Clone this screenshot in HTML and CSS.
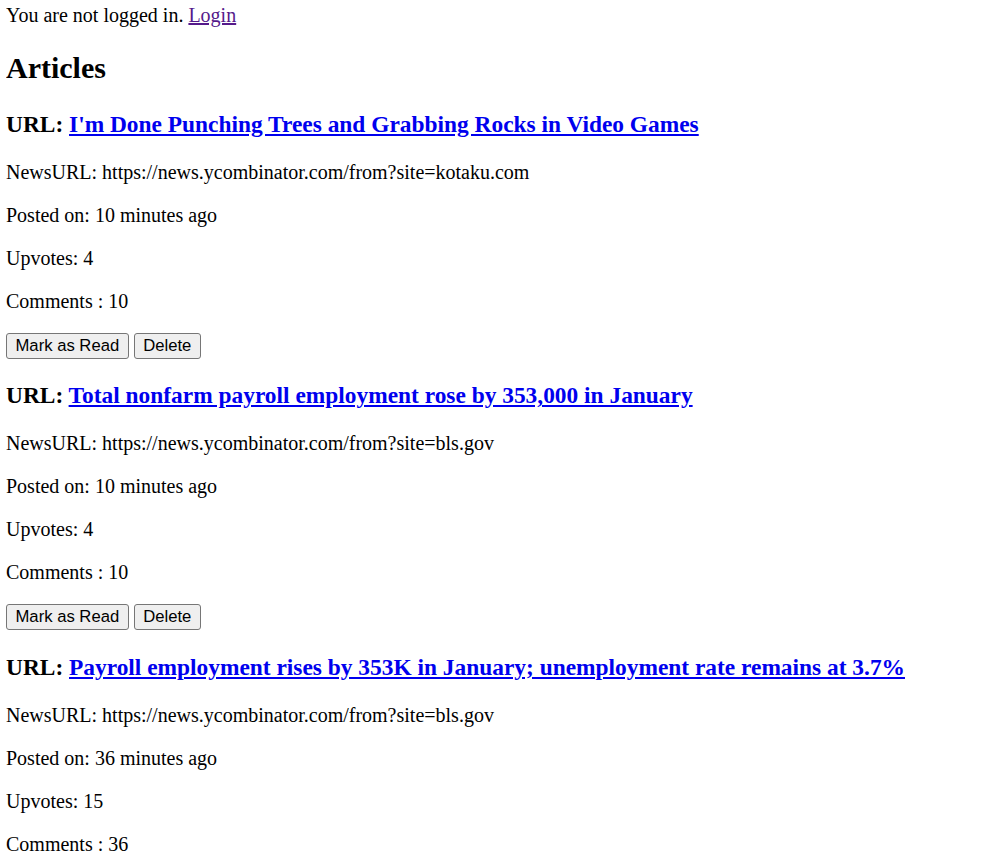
FILE: index.html
```html
<!DOCTYPE html>
<html>
<head>
<meta charset="utf-8">
<title>Articles</title>
<link rel="stylesheet" href="styles.css">
</head>
<body>
<div class="status">You are not logged in. <a class="visited" href="#login">Login</a></div>
<h2 class="title">Articles</h2>

<div class="article">
  <h3 class="url">URL: <a href="#a1">I'm Done Punching Trees and Grabbing Rocks in Video Games</a></h3>
  <p>NewsURL: https://news.ycombinator.com/from?site=kotaku.com</p>
  <p>Posted on: 10 minutes ago</p>
  <p>Upvotes: 4</p>
  <p>Comments : 10</p>
  <button class="btn">Mark as Read</button> <button class="btn">Delete</button>
</div>

<div class="article">
  <h3 class="url">URL: <a href="#a2">Total nonfarm payroll employment rose by 353,000 in January</a></h3>
  <p>NewsURL: https://news.ycombinator.com/from?site=bls.gov</p>
  <p>Posted on: 10 minutes ago</p>
  <p>Upvotes: 4</p>
  <p>Comments : 10</p>
  <button class="btn">Mark as Read</button> <button class="btn">Delete</button>
</div>

<div class="article">
  <h3 class="url">URL: <a href="#a3">Payroll employment rises by 353K in January; unemployment rate remains at 3.7%</a></h3>
  <p>NewsURL: https://news.ycombinator.com/from?site=bls.gov</p>
  <p>Posted on: 36 minutes ago</p>
  <p>Upvotes: 15</p>
  <p>Comments : 36</p>
  <button class="btn">Mark as Read</button> <button class="btn">Delete</button>
</div>
</body>
</html>
```
FILE: styles.css
```css
html, body {
  background: #fff;
}
body {
  margin: 4px 6px;
  font-family: "Liberation Serif", "Times New Roman", serif;
  font-size: 20px;
  line-height: 1.15;
  color: #000;
}
a {
  color: #0000ee;
}
a.visited {
  color: #551a8b;
}
.title {
  font-size: 30px;
  font-weight: bold;
  margin: 24px 0 25px;
}
.url {
  font-size: 23.4px;
  font-weight: bold;
  margin: 23.4px 0;
}
p {
  margin: 20px 0;
}
.btn {
  font-family: "Liberation Sans", Arial, sans-serif;
  font-size: 16.67px;
  line-height: normal;
  color: #000;
  background: #efefef;
  border: 1px solid #767676;
  border-radius: 3px;
  padding: 2px 8.5px;
  margin: 0;
  height: 26px;
}
```
